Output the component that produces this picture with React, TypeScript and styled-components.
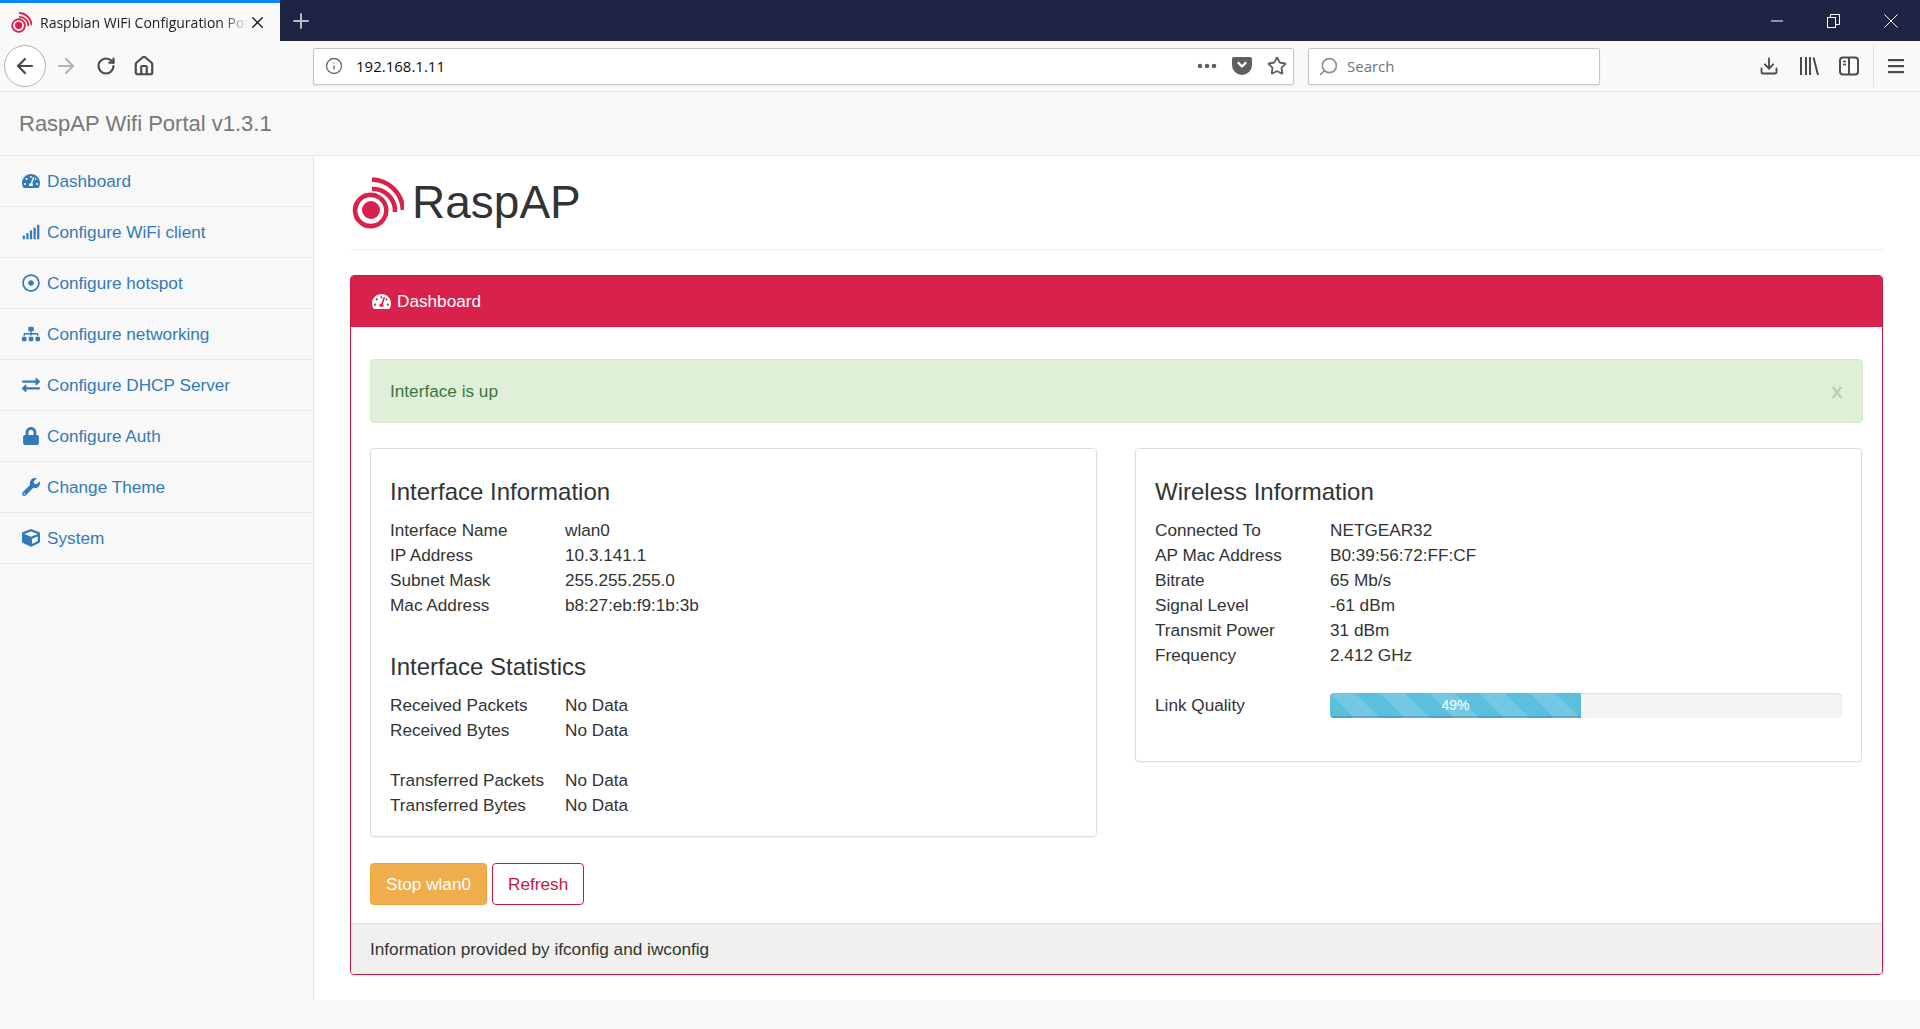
import styled, { createGlobalStyle } from "styled-components";
import { ArrowLeft, ArrowRight, Download, Home, Info, Plus, RotateCw, Search, Star, X } from "lucide-react";
import { FaCube, FaExchangeAlt, FaLock, FaRegDotCircle, FaSignal, FaSitemap, FaTachometerAlt, FaWrench } from "react-icons/fa";

const GlobalStyle = createGlobalStyle`
  * { box-sizing: border-box; }
  body {
    margin: 0;
    background: #f8f8f8;
    color: #333;
    font-family: "Liberation Sans", Arial, sans-serif;
    font-size: 16px;
  }
`;

const Page = styled.div`
  width: 1920px;
  height: 1029px;
  overflow: hidden;
  display: flex;
  flex-direction: column;
`;

/* browser chrome */
const TabStrip = styled.div`
  height: 41px;
  background: #1f2444;
  color: #fff;
  display: flex;
  align-items: stretch;
  flex: none;
`;

const Tab = styled.div`
  width: 280px;
  background: #f9f9f9;
  border-top: 3px solid #0a84ff;
  display: flex;
  align-items: center;
  padding: 0 12px 0 11px;
  color: #222;
`;

const TabTitle = styled.span`
  font-family: "Open Sans", sans-serif;
  font-size: 14px;
  margin-left: 8px;
  width: 208px;
  white-space: nowrap;
  overflow: hidden;
  -webkit-mask-image: linear-gradient(to right, #000 88%, transparent);
  mask-image: linear-gradient(to right, #000 88%, transparent);
`;

const NewTab = styled.div`
  width: 42px;
  display: flex;
  align-items: center;
  justify-content: center;
  color: #b9bcc8;
`;

const WindowControls = styled.div`
  margin-left: auto;
  display: flex;
  align-items: center;
  gap: 44px;
  padding-right: 22px;
`;

const Toolbar = styled.div`
  height: 51px;
  flex: none;
  background: #f9f9f9;
  border-bottom: 1px solid #e1e1e2;
  display: flex;
  align-items: center;
  position: relative;
  color: #4a4a4f;
`;

const BackButton = styled.div`
  width: 42px;
  height: 42px;
  margin-left: 4px;
  border: 1px solid #b1b1b3;
  border-radius: 50%;
  background: #fff;
  display: flex;
  align-items: center;
  justify-content: center;
  flex: none;
`;

const ToolIcon = styled.div<{ $w: number; $muted?: boolean }>`
  width: ${(p) => p.$w}px;
  flex: none;
  display: flex;
  align-items: center;
  justify-content: center;
  color: ${(p) => (p.$muted ? "#b1b1b3" : "#4a4a4f")};
`;

const UrlBar = styled.div`
  height: 37px;
  background: #fff;
  border: 1px solid #c6c6c8;
  border-radius: 2px;
  box-shadow: 0 1px 2px rgba(0, 0, 0, 0.08);
  display: flex;
  align-items: center;
  flex: none;
  font-family: "Open Sans", sans-serif;
`;

const AddressBar = styled(UrlBar)`
  width: 981px;
  margin-left: 157px;
  padding: 0 6px 0 11px;
  font-size: 15px;
  color: #0c0c0d;
`;

const AddressText = styled.span`
  margin-left: 13px;
  flex: 1;
`;

const PageActions = styled.div`
  display: flex;
  align-items: center;
  gap: 15px;
`;

const SearchBar = styled(UrlBar)`
  width: 292px;
  margin-left: 14px;
  padding-left: 9px;
  font-size: 15px;
  color: #737373;
  gap: 8px;
`;

const RightTools = styled.div`
  margin-left: auto;
  display: flex;
  align-items: center;
  height: 100%;
`;

const ToolSep = styled.div`
  width: 1px;
  height: 42px;
  background: #e1e1e2;
  margin: 0 14px 0 14px;
`;

/* app */
const Navbar = styled.div`
  height: 64px;
  flex: none;
  background: #f8f8f8;
  border-bottom: 1px solid #e7e7e7;
  display: flex;
  align-items: center;
  padding-left: 19px;
  font-size: 22px;
  color: #777;
`;

const Body = styled.div`
  display: flex;
  height: 844px;
  flex: none;
`;

const Sidebar = styled.nav`
  width: 314px;
  flex: none;
  background: #f8f8f8;
  border-right: 1px solid #e7e7e7;
`;

const SideItem = styled.div`
  height: 51px;
  border-bottom: 1px solid #e7e7e7;
  display: flex;
  align-items: center;
  padding-left: 21px;
  color: #337ab7;
  font-size: 17.2px;
`;

const SideIcon = styled.span`
  width: 19px;
  margin-right: 7px;
  display: flex;
  justify-content: center;
  font-size: 18px;
`;

const Main = styled.main`
  flex: 1;
  background: #fff;
  padding: 0 37px 25px 36px;
`;

const PageHeader = styled.header`
  height: 94px;
  border-bottom: 1px solid #eee;
  display: flex;
  align-items: center;
  padding: 0 0 0 2px;
  gap: 8px;
`;

const Title = styled.h1`
  margin: 0 0 2px;
  font-size: 46px;
  font-weight: 400;
`;

const Panel = styled.section`
  margin-top: 25px;
  border: 1px solid #c9173f;
  border-radius: 4px;
  overflow: hidden;
`;

const PanelHeading = styled.div`
  height: 51px;
  background: #d8224c;
  color: #fff;
  display: flex;
  align-items: center;
  gap: 6px;
  padding-left: 21px;
  font-size: 17.2px;
`;

const PanelBody = styled.div`
  padding: 32px 19px 18px;
`;

const Alert = styled.div`
  height: 64px;
  background: #dff0d8;
  border: 1px solid #d6e9c6;
  border-radius: 4px;
  color: #3c763d;
  display: flex;
  align-items: center;
  justify-content: space-between;
  padding: 0 19px;
  font-size: 17.2px;
`;

const AlertClose = styled.span`
  font-weight: 700;
  font-size: 21px;
  color: #3c763d;
  opacity: 0.25;
`;

const Columns = styled.div`
  margin-top: 25px;
  display: grid;
  grid-template-columns: 727px 727px;
  gap: 38px;
  align-items: start;
`;

const Card = styled.div`
  border: 1px solid #ddd;
  border-radius: 4px;
  box-shadow: 0 1px 2px rgba(0, 0, 0, 0.05);
  padding: 28px 19px 18px;
`;

const CardTitle = styled.h4`
  margin: 0 0 11px;
  height: 30px;
  line-height: 30px;
  font-size: 24px;
  font-weight: 400;
  & ~ & {
    margin-top: 34px;
  }
`;

const Row = styled.div<{ $gap?: boolean }>`
  display: grid;
  grid-template-columns: 175px 1fr;
  height: 25px;
  line-height: 25px;
  font-size: 17.2px;
  align-items: center;
  margin-top: ${(p) => (p.$gap ? "25px" : "0")};
`;

const Progress = styled.div`
  height: 25px;
  background: #f5f5f5;
  border-radius: 4px;
  overflow: hidden;
  box-shadow: inset 0 1px 2px rgba(0, 0, 0, 0.1);
  margin-right: 0;
`;

const ProgressBar = styled.div`
  height: 100%;
  background-color: #5bc0de;
  background-image: linear-gradient(
    45deg,
    rgba(255, 255, 255, 0.15) 25%,
    transparent 25%,
    transparent 50%,
    rgba(255, 255, 255, 0.15) 50%,
    rgba(255, 255, 255, 0.15) 75%,
    transparent 75%,
    transparent
  );
  background-size: 50px 50px;
  box-shadow: inset 0 -2px 0 rgba(0, 0, 0, 0.15);
  color: #fff;
  text-align: center;
  font-size: 14px;
  line-height: 25px;
`;

const Actions = styled.div`
  margin-top: 26px;
  display: flex;
  gap: 5px;
`;

const Button = styled.button<{ $variant: "warning" | "outline" }>`
  height: 42px;
  padding: 0 15px;
  border-radius: 4px;
  font: inherit;
  font-size: 17.2px;
  background: ${(p) => (p.$variant === "warning" ? "#f0ad4e" : "#fff")};
  color: ${(p) => (p.$variant === "warning" ? "#fff" : "#c9173f")};
  border: 1px solid ${(p) => (p.$variant === "warning" ? "#eea236" : "#c9173f")};
`;

const PanelFooter = styled.div`
  height: 51px;
  background: #f1f0ef;
  border-top: 1px solid #ddd;
  display: flex;
  align-items: center;
  padding-left: 19px;
  font-size: 17.2px;
`;

const Logo = ({ size }: { size: number }) => (
  <svg width={size} height={size} viewBox="0 0 52 52" fill="none" style={{ flex: "none" }}>
    <circle cx="19" cy="33" r="9" fill="#d8224c" />
    <path d="M27.5 20.6A15.6 15.6 0 1 1 6.3 24" stroke="#d8224c" strokeWidth="4.6" />
    <path d="M6.3 24A15.6 15.6 0 0 1 27.5 20.6" stroke="#d8224c" strokeWidth="4.6" />
    <path d="M20 12A22 22 0 0 1 43 35" stroke="#d8224c" strokeWidth="4.6" />
    <path d="M20 2.5A32 32 0 0 1 51 33" stroke="#d8224c" strokeWidth="4.6" />
  </svg>
);

const PocketIcon = () => (
  <svg width="20" height="20" viewBox="0 0 20 20">
    <path
      fill="#5f5f63"
      fillRule="evenodd"
      d="M2 1h16a2 2 0 0 1 2 2v6a10 10 0 0 1-20 0V3a2 2 0 0 1 2-2zm3 6l5 5 5-5-1.6-1.4L10 9 6.6 5.6z"
    />
  </svg>
);

const LibraryIcon = () => (
  <svg width="20" height="20" viewBox="0 0 20 20" fill="none" stroke="#4a4a4f" strokeWidth="2">
    <path d="M2 1v18M7 1v18M11 1v18M14.5 1.5l4.5 17.5" />
  </svg>
);

const SidebarIcon = () => (
  <svg width="20" height="20" viewBox="0 0 20 20" fill="none" stroke="#4a4a4f" strokeWidth="2">
    <rect x="1" y="1.5" width="18" height="17" rx="3" />
    <path d="M10 2v16" />
    <path d="M4 5.5h3M4 8.5h3" strokeWidth="1.5" />
  </svg>
);

const MenuIcon = () => (
  <svg width="16" height="16" viewBox="0 0 16 16" fill="#4a4a4f">
    <rect y="1" width="16" height="2.2" />
    <rect y="7" width="16" height="2.2" />
    <rect y="13" width="16" height="2.2" />
  </svg>
);

const Minimize = () => (
  <svg width="12" height="12" viewBox="0 0 12 12" stroke="#fff">
    <path d="M0 6h12" />
  </svg>
);

const Restore = () => (
  <svg width="13" height="14" viewBox="0 0 13 14" fill="none" stroke="#fff">
    <rect x="0.5" y="3.5" width="8" height="10" />
    <path d="M3.5 3.5v-3h9v10h-4" />
  </svg>
);

const Close = () => (
  <svg width="14" height="14" viewBox="0 0 14 14" stroke="#fff">
    <path d="M0.5 0.5l13 13M13.5 0.5l-13 13" />
  </svg>
);

const navItems = [
  { icon: <FaTachometerAlt />, label: "Dashboard" },
  { icon: <FaSignal />, label: "Configure WiFi client" },
  { icon: <FaRegDotCircle />, label: "Configure hotspot" },
  { icon: <FaSitemap />, label: "Configure networking" },
  { icon: <FaExchangeAlt />, label: "Configure DHCP Server" },
  { icon: <FaLock />, label: "Configure Auth" },
  { icon: <FaWrench />, label: "Change Theme" },
  { icon: <FaCube />, label: "System" },
];

const interfaceInfo = [
  ["Interface Name", "wlan0"],
  ["IP Address", "10.3.141.1"],
  ["Subnet Mask", "255.255.255.0"],
  ["Mac Address", "b8:27:eb:f9:1b:3b"],
];

const wirelessInfo = [
  ["Connected To", "NETGEAR32"],
  ["AP Mac Address", "B0:39:56:72:FF:CF"],
  ["Bitrate", "65 Mb/s"],
  ["Signal Level", "-61 dBm"],
  ["Transmit Power", "31 dBm"],
  ["Frequency", "2.412 GHz"],
];

const App = () => {
  const quality = 49;
  return (
    <Page>
      <GlobalStyle />
      <TabStrip>
        <Tab>
          <Logo size={21} />
          <TabTitle>Raspbian WiFi Configuration Portal</TabTitle>
          <X size={19} strokeWidth={1.8} />
        </Tab>
        <NewTab>
          <Plus size={24} strokeWidth={2} />
        </NewTab>
        <WindowControls>
          <Minimize />
          <Restore />
          <Close />
        </WindowControls>
      </TabStrip>
      <Toolbar>
        <BackButton>
          <ArrowLeft size={24} strokeWidth={2.2} />
        </BackButton>
        <ToolIcon $w={24} $muted style={{ marginLeft: 8 }}>
          <ArrowRight size={24} strokeWidth={2} />
        </ToolIcon>
        <ToolIcon $w={24} style={{ marginLeft: 16 }}>
          <RotateCw size={20} strokeWidth={2.6} />
        </ToolIcon>
        <ToolIcon $w={24} style={{ marginLeft: 14 }}>
          <Home size={22} strokeWidth={2.4} />
        </ToolIcon>
        <AddressBar>
          <Info size={18} strokeWidth={1.8} color="#6a6a6e" />
          <AddressText>192.168.1.11</AddressText>
          <PageActions>
            <svg width="20" height="6" viewBox="0 0 20 6" fill="#5f5f63">
              <circle cx="3" cy="3" r="2.3" />
              <circle cx="10" cy="3" r="2.3" />
              <circle cx="17" cy="3" r="2.3" />
            </svg>
            <PocketIcon />
            <Star size={20} strokeWidth={2.2} color="#5f5f63" />
          </PageActions>
        </AddressBar>
        <SearchBar>
          <Search size={21} strokeWidth={1.8} color="#8f8f90" style={{ transform: "scaleX(-1)" }} />
          Search
        </SearchBar>
        <RightTools>
          <ToolIcon $w={20}>
            <Download size={22} strokeWidth={2.2} />
          </ToolIcon>
          <ToolIcon $w={20} style={{ marginLeft: 20 }}>
            <LibraryIcon />
          </ToolIcon>
          <ToolIcon $w={20} style={{ marginLeft: 20 }}>
            <SidebarIcon />
          </ToolIcon>
          <ToolSep />
          <ToolIcon $w={16} style={{ marginRight: 16 }}>
            <MenuIcon />
          </ToolIcon>
        </RightTools>
      </Toolbar>
      <Navbar>RaspAP Wifi Portal v1.3.1</Navbar>
      <Body>
        <Sidebar>
          {navItems.map((item) => (
            <SideItem key={item.label}>
              <SideIcon>{item.icon}</SideIcon>
              {item.label}
            </SideItem>
          ))}
        </Sidebar>
        <Main>
          <PageHeader>
            <Logo size={52} />
            <Title>RaspAP</Title>
          </PageHeader>
          <Panel>
            <PanelHeading>
              <FaTachometerAlt size={19} />
              Dashboard
            </PanelHeading>
            <PanelBody>
              <Alert>
                Interface is up
                <AlertClose>x</AlertClose>
              </Alert>
              <Columns>
                <Card>
                  <CardTitle>Interface Information</CardTitle>
                  {interfaceInfo.map(([k, v]) => (
                    <Row key={k}>
                      <span>{k}</span>
                      <span>{v}</span>
                    </Row>
                  ))}
                  <CardTitle>Interface Statistics</CardTitle>
                  <Row>
                    <span>Received Packets</span>
                    <span>No Data</span>
                  </Row>
                  <Row>
                    <span>Received Bytes</span>
                    <span>No Data</span>
                  </Row>
                  <Row $gap>
                    <span>Transferred Packets</span>
                    <span>No Data</span>
                  </Row>
                  <Row>
                    <span>Transferred Bytes</span>
                    <span>No Data</span>
                  </Row>
                </Card>
                <Card>
                  <CardTitle>Wireless Information</CardTitle>
                  {wirelessInfo.map(([k, v]) => (
                    <Row key={k}>
                      <span>{k}</span>
                      <span>{v}</span>
                    </Row>
                  ))}
                  <Row $gap>
                    <span>Link Quality</span>
                    <Progress>
                      <ProgressBar style={{ width: `${quality}%` }}>{quality}%</ProgressBar>
                    </Progress>
                  </Row>
                  <Row />
                </Card>
              </Columns>
              <Actions>
                <Button $variant="warning">Stop wlan0</Button>
                <Button $variant="outline">Refresh</Button>
              </Actions>
            </PanelBody>
            <PanelFooter>Information provided by ifconfig and iwconfig</PanelFooter>
          </Panel>
        </Main>
      </Body>
    </Page>
  );
};

export default App;
